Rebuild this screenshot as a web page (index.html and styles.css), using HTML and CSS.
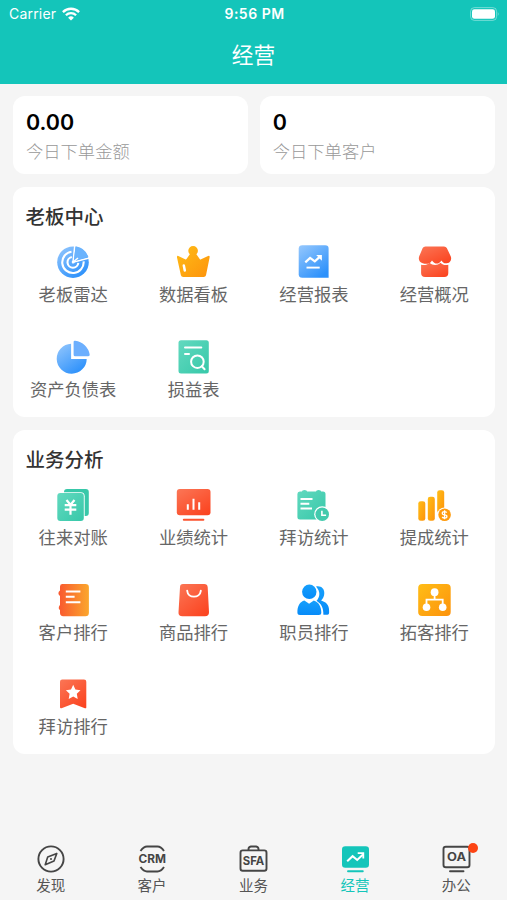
FILE: index.html
```html
<!DOCTYPE html>
<html lang="zh-CN">
<head>
<meta charset="utf-8">
<title>经营</title>
<link rel="stylesheet" href="styles.css">
</head>
<body>
<svg class="defs" width="0" height="0" aria-hidden="true">
  <defs>
    <linearGradient id="blue" x1="0" y1="0" x2=".7" y2="1"><stop offset="0" stop-color="#96c8fd"/><stop offset="1" stop-color="#2d91fb"/></linearGradient>
    <linearGradient id="gold" x1="0" y1="0" x2="1" y2="1"><stop offset="0" stop-color="#ffbd16"/><stop offset="1" stop-color="#fd930c"/></linearGradient>
    <linearGradient id="red" x1="0" y1="0" x2=".8" y2="1"><stop offset="0" stop-color="#fb7656"/><stop offset="1" stop-color="#fb4521"/></linearGradient>
    <linearGradient id="green" x1="0" y1="0" x2="1" y2="1"><stop offset="0" stop-color="#62d9bf"/><stop offset="1" stop-color="#37c8a9"/></linearGradient>
    <linearGradient id="sunset" x1="0" y1="0" x2="1" y2="0"><stop offset="0" stop-color="#f9572f"/><stop offset="1" stop-color="#fba72d"/></linearGradient>
    <linearGradient id="azure" x1="0" y1="0" x2="0" y2="1"><stop offset="0" stop-color="#169ffc"/><stop offset="1" stop-color="#078bf8"/></linearGradient>
  </defs>
</svg>

<header class="header">
  <div class="status">
    <div class="carrier">Carrier
      <svg width="18" height="14" viewBox="0 0 18 14" fill="none" stroke="#fff" stroke-width="2.3"><path d="M.9 5.1a11.5 11.5 0 0 1 16.2 0M3.9 8.3a7.3 7.3 0 0 1 10.2 0"/><path d="M9 13.6 6.1 10.7a4.1 4.1 0 0 1 5.8 0z" fill="#fff" stroke="none"/></svg>
    </div>
    <div class="time">9:56 PM</div>
    <div class="battery">
      <svg width="30" height="14" viewBox="0 0 30 14"><rect x=".6" y=".6" width="26" height="12.8" rx="3.8" fill="none" stroke="#fff" stroke-opacity=".4"/><rect x="2" y="2.2" width="23" height="9.6" rx="2.4" fill="#fff"/><path d="M27.8 4.8q1.8 2.2 0 4.4z" fill="#fff" fill-opacity=".45"/></svg>
    </div>
  </div>
  <h1 class="title">经营</h1>
</header>

<main class="content">
  <div class="stats">
    <div class="stat"><strong>0.00</strong><span>今日下单金额</span></div>
    <div class="stat"><strong>0</strong><span>今日下单客户</span></div>
  </div>

  <section class="panel">
    <h2>老板中心</h2>
    <div class="grid">
      <div class="item">
        <svg viewBox="0 0 36 36"><circle cx="18" cy="18.2" r="15.8" fill="url(#blue)"/><path d="M19.8 1.5 18 18.2 35 13.7" fill="none" stroke="#fff" stroke-width="1.5"/><path d="M16.5 7.700A10.700 10.700 0 1 0 28.600 17.400M16.800 13a5.400 5.400 0 1 0 6.500 5.800" fill="none" stroke="#fff" stroke-width="2.100"/><path d="M20.7 2.2 18.8 16.9 33.4 13A16 16 0 0 0 20.7 2.2z" fill="#6ab3fd"/><path d="M18.200 18 23 14" stroke="#fff" stroke-width="1.500"/><circle cx="18.200" cy="18" r="1.500" fill="#fff"/></svg>
        <span>老板雷达</span>
      </div>
      <div class="item">
        <svg viewBox="0 0 36 36"><path d="M14.800 10.300a4.800 4.800 0 1 1 6.600 0l3.300 4.700q.5.900 1.400.3l6.400-3.100q2.500-1.200 2.100 1.200L31 31.200Q30.600 33 28.600 33H8.200Q6.300 33 5.900 31.200L2 13.400q-.2-2.400 1.900-1.200l6.200 3.100q.9.500 1.400-.3z" fill="url(#gold)"/><path d="m8.8 21.4 1 5.2" stroke="#fff" stroke-width="2.5" stroke-linecap="round"/></svg>
        <span>数据看板</span>
      </div>
      <div class="item">
        <svg viewBox="0 0 36 36"><path d="M7.3 1.2H30.2q3.4 0 3.4 3.2V33.8H7.3Q3.7 33.8 3.7 30.3V4.6Q3.7 1.2 7.3 1.2z" fill="url(#blue)"/><path d="m10.3 18.4 4.8-4.5 4.7 3.4 5.8-5.2" fill="none" stroke="#fff" stroke-width="2.2"/><path d="M21.2 11h5.7v5.8z" fill="#fff"/><path d="M11.5 23.6h13.2" stroke="#fff" stroke-width="1.9"/></svg>
        <span>经营报表</span>
      </div>
      <div class="item">
        <svg viewBox="0 0 36 36"><path d="M9.4 2.5H28q2 0 2.8 1.6l4 8.3c1.2 3.3-.8 6.2-3.1 6.7-3.2.9-5.2-.8-6.3-2.700-2.300 4.100-6.800 4.100-9.400 0-2.500 4.100-6 3.800-9.300 2.900-3.300-1.100-4.700-4-3.400-7.200l3.400-8Q7.500 2.500 9.400 2.500z" fill="url(#red)"/><path d="M5.100 20.800c3.100.8 6.500 0 8.400-2 3.400 3 7.800 3 11 0 2 2 4.600 2.800 7.800 2V29q0 4-4 4H9.100q-4 0-4-4z" fill="url(#red)"/></svg>
        <span>经营概况</span>
      </div>
      <div class="item">
        <svg viewBox="0 0 36 36"><path d="M16.1 4.7V19.9H31.7A15 15 0 1 1 16.1 4.7z" fill="url(#blue)"/><path d="M18.6 3q0-1.6 1.6-1.3A16.8 16.8 0 0 1 34.7 15.6q.2 1.6-1.4 1.6H20.2q-1.6 0-1.6-1.5z" fill="#6caffe"/></svg>
        <span>资产负债表</span>
      </div>
      <div class="item">
        <svg viewBox="0 0 36 36"><rect x="3.5" y="1.3" width="30.3" height="33.2" rx="2.5" fill="url(#green)"/><g fill="none" stroke="#fff" stroke-width="2" stroke-linecap="round"><path d="M10 8.5h16.3M10 15.1h4"/><circle cx="22.4" cy="22.7" r="6.3"/><path d="m26.8 27.2 2.8 3"/></g></svg>
        <span>损益表</span>
      </div>
    </div>
  </section>

  <section class="panel">
    <h2>业务分析</h2>
    <div class="grid">
      <div class="item">
        <svg viewBox="0 0 36 36"><rect x="9" y="2" width="24.8" height="27" rx="3" fill="#38c8a9"/><rect x="1.5" y="5.2" width="28.2" height="29.7" rx="4" fill="#fff"/><rect x="2.3" y="6" width="26.5" height="28" rx="3" fill="url(#green)"/><path d="m11.5 13 4 4.7 4-4.7M9.7 18.2h11.6M9.7 22.7h11.6M15.5 17.8v10" fill="none" stroke="#fff" stroke-width="2.2"/></svg>
        <span>往来对账</span>
      </div>
      <div class="item">
        <svg viewBox="0 0 36 36"><rect x="1.8" y="2.1" width="33.7" height="26.2" rx="3" fill="url(#red)"/><path d="M12.8 17.2v5.6M18.5 11.7v11.1M24.2 15.2v7.6" stroke="#fff" stroke-width="2"/><path d="M8.8 32.7h19.6" stroke="#fc532f" stroke-width="2" stroke-linecap="round"/></svg>
        <span>业绩统计</span>
      </div>
      <div class="item">
        <svg viewBox="0 0 36 36"><path d="M4.800 4.500h2.100q0-1.500 2.600-1.500t2.600 1.500H21q0-1.500 2.600-1.500T26.200 4.500H28q2.500 0 2.500 2.500v25.500H5q-2.600 0-2.600-2.500V7Q2.400 4.500 4.800 4.500z" fill="url(#green)"/><path d="M5.500 11.900h12M5.500 16.700h8.800M5.500 21.500h11.500" stroke="#fff" stroke-width="2"/><circle cx="27.200" cy="27.200" r="8" fill="#fff"/><circle cx="27.200" cy="27.200" r="6.800" fill="#43caad"/><path d="M26.900 23.700v4.500h4.200" fill="none" stroke="#fff" stroke-width="1.600"/></svg>
        <span>拜访统计</span>
      </div>
      <div class="item">
        <svg viewBox="0 0 36 36"><rect x="2.300" y="14.200" width="7" height="19.600" rx="2.400" fill="url(#gold)"/><rect x="11.800" y="9.700" width="7" height="24.100" rx="2.400" fill="url(#gold)"/><rect x="21.200" y="3.200" width="7" height="23" rx="2.400" fill="url(#gold)"/><circle cx="28.600" cy="27.800" r="7.400" fill="#fff"/><circle cx="28.600" cy="27.800" r="6.300" fill="#ff9b0d"/><path d="M30.700 25.700q-.7-1-2.200-1-2.200 0-2.200 1.500t2.300 1.600 2.300 1.700-2.300 1.600q-1.600 0-2.400-1.100M28.600 23.300v9" fill="none" stroke="#fff" stroke-width="1.300"/></svg>
        <span>提成统计</span>
      </div>
      <div class="item">
        <svg viewBox="0 0 36 36"><path d="M7.500 2H30.500q3.400 0 3.400 3.300v25.400q0 3.500-3.500 3.500H8.200q-3.200 0-3.200-3.400v-2.600q-1.700-1.300-1.200-3 .2-1.600 1.200-2.300v-9q-1.600-.7-1.600-2.600T5 8.400V4.400Q5 2 7.500 2z" fill="url(#sunset)"/><path d="M10.800 9.600h14.600M10.800 14.800h8.800M10.800 20.200h14.600" stroke="#fff" stroke-width="2"/></svg>
        <span>客户排行</span>
      </div>
      <div class="item">
        <svg viewBox="0 0 36 36"><path d="M8 2H29.200q3.200 0 3.500 3.200L34 30.300q0 4-4 4H7.400q-4.200 0-3.900-4L5 5.200Q5 2 8 2z" fill="url(#red)"/><path d="M12.200 8.800c.6 7.800 12.800 7.800 13.600 0" fill="none" stroke="#fff" stroke-width="1.900" stroke-linecap="round"/></svg>
        <span>商品排行</span>
      </div>
      <div class="item">
        <svg viewBox="0 0 36 36"><g fill="url(#azure)"><path d="M21 4.500c5-1 8.300 2 8.300 6.500 0 3.500-1.300 5.500-3.200 7.500 5 1.500 8 4.500 8 10V31q0 1.700-1.700 1.700h-4C28.400 26 26.500 21 21 19.500c4.500-5 4.500-10 0-15z"/><path d="M2.400 30.500C2.200 24 5 19.600 9.400 18.500l4.700 3.200 4.700-3.200c4.700 1.500 7.500 6 7.500 12q0 2.500-2.500 2.500H5q-2.600 0-2.600-2.500z" stroke="#fff" stroke-width="1.500" paint-order="stroke"/><circle cx="14.300" cy="9.800" r="7.200" stroke="#fff" stroke-width="1.500" paint-order="stroke"/></g></svg>
        <span>职员排行</span>
      </div>
      <div class="item">
        <svg viewBox="0 0 36 36"><rect x="2.200" y="2" width="32.500" height="32" rx="4" fill="url(#gold)"/><path d="M18.600 12v5.700M10.500 24v-6.300h16.200V24" fill="none" stroke="#fff" stroke-width="1.800"/><g fill="#fff"><circle cx="18.600" cy="10.200" r="3.900"/><circle cx="10.500" cy="25.300" r="3.800"/><circle cx="26.700" cy="25.300" r="3.800"/></g></svg>
        <span>拓客排行</span>
      </div>
      <div class="item">
        <svg viewBox="0 0 36 36"><path d="M7.200 3.400H29q2.300 0 2.300 2.300v25.800q-.2 1.200-1.400.7L18.200 27.700 6.500 32.200Q5 32.700 5 31.200V5.700Q5 3.400 7.200 3.400z" fill="url(#red)"/><path d="m18.200 8.800 2.200 4.700 5.100.7-3.700 3.600.9 5.100-4.500-2.500-4.500 2.500.9-5.100-3.700-3.600 5.100-.7z" fill="#fff"/></svg>
        <span>拜访排行</span>
      </div>
    </div>
  </section>
</main>

<nav class="tabs">
  <div class="tab">
    <svg viewBox="0 0 32 32" fill="none" stroke="#454545" stroke-width="1.900"><circle cx="16" cy="16" r="12.600"/><path d="M21.800 10.400 12.700 14 10.200 21.800 19 18z" stroke-width="1.600" stroke-linejoin="round"/><circle cx="16" cy="16" r="1" fill="#454545" stroke="none"/></svg>
    <span>发现</span>
  </div>
  <div class="tab">
    <svg viewBox="0 0 32 32"><path d="M4.500 8Q7.700 3.500 11 3.500H21.500Q25 3.500 28 8M4.500 24Q7.700 28.500 11 28.500H21.500Q25 28.500 28 24" fill="none" stroke="#454545" stroke-width="1.900"/><text x="16.300" y="20.100" class="glyph" textLength="27.500" lengthAdjust="spacingAndGlyphs">CRM</text></svg>
    <span>客户</span>
  </div>
  <div class="tab">
    <svg viewBox="0 0 32 32"><path d="M11.500 7.500V6q0-2 2.400-2.500h5.200Q21.500 4 21.500 6v1.500" fill="none" stroke="#454545" stroke-width="1.900"/><rect x="3.500" y="7.400" width="26" height="20.300" rx="2.300" fill="none" stroke="#454545" stroke-width="1.900"/><text x="16.500" y="21.800" class="glyph" textLength="21.500" lengthAdjust="spacingAndGlyphs">SFA</text></svg>
    <span>业务</span>
  </div>
  <div class="tab active">
    <svg viewBox="0 0 32 32"><rect x="3" y="3.200" width="27" height="21.500" rx="3.300" fill="#14c5ba"/><path d="m8.200 18.300 5.400-5.100 4.600 3.800 5.800-5.500" fill="none" stroke="#fff" stroke-width="2"/><path d="M18.700 9.200h6.500v6.300h-1.800v-4.500h-4.700z" fill="#fff"/><path d="M9 28.200h14.800" stroke="#14c5ba" stroke-width="1.900" stroke-linecap="round"/></svg>
    <span>经营</span>
  </div>
  <div class="tab">
    <svg viewBox="0 0 32 32"><rect x="3.500" y="3.800" width="26" height="20.500" rx="2.300" fill="none" stroke="#454545" stroke-width="1.900"/><text x="16.500" y="18.400" class="glyph" textLength="19" lengthAdjust="spacingAndGlyphs">OA</text><path d="M10 28.200h13.500" stroke="#454545" stroke-width="1.900" stroke-linecap="round"/></svg>
    <i class="badge"></i>
    <span>办公</span>
  </div>
</nav>
</body>
</html>
```
FILE: styles.css
```css
* {
  box-sizing: border-box;
}

body {
  margin: 0;
  height: 900px;
  display: flex;
  flex-direction: column;
  overflow: hidden;
  background: #f5f5f5;
  color: #333;
  font-family: Inter, "Noto Sans CJK SC", sans-serif;
}

svg {
  display: block;
}

.defs {
  position: absolute;
}

.header {
  height: 84px;
  flex: none;
  background: #14c5ba;
  color: #fff;
}

.status {
  display: grid;
  grid-template-columns: 1fr auto 1fr;
  align-items: center;
  height: 27px;
  padding: 0 7px 0 9px;
  font-size: 14px;
  line-height: 27px;
}

.carrier {
  display: flex;
  align-items: center;
  gap: 6px;
  letter-spacing: 0.2px;
}

.time {
  font-weight: 600;
  font-size: 14px;
  letter-spacing: 0.5px;
}

.battery {
  display: flex;
  justify-content: flex-end;
}

.title {
  margin: 0;
  font-size: 21.7px;
  font-weight: 400;
  line-height: 56px;
  text-align: center;
}

.content {
  flex: 1;
  padding: 12px 12.5px 0 13px;
}

.stats {
  display: grid;
  grid-template-columns: 1fr 1fr;
  gap: 12px;
}

.stat {
  height: 78px;
  padding: 11px 13px;
  border-radius: 12px;
  background: #fff;
}

.stat strong,
.stat span {
  display: block;
}

.stat strong {
  color: #000;
  font-size: 21.5px;
  font-weight: 600;
  line-height: 30px;
}

.stat span {
  color: #999;
  font-size: 17.3px;
  font-weight: 300;
  line-height: 30px;
}

.panel {
  margin-top: 12.5px;
  padding: 15px 0 13px;
  border-radius: 12px;
  background: #fff;
}

.panel h2 {
  margin: 0 12.5px;
  font-size: 19.5px;
  font-weight: 500;
  line-height: 30px;
}

.grid {
  display: grid;
  grid-template-columns: repeat(4, 1fr);
  grid-auto-rows: 94.5px;
  padding-top: 12.5px;
  margin-bottom: -29px;
}

.panel + .panel .grid {
  margin-bottom: -30px;
}

.item {
  display: flex;
  flex-direction: column;
  align-items: center;
  color: #666;
  font-size: 17.3px;
  line-height: 30px;
}

.item svg {
  width: 36px;
  height: 36px;
  margin-right: 1px;
}

.tabs {
  display: grid;
  grid-template-columns: repeat(5, 1fr);
  height: 57px;
  flex: none;
}

.tab {
  position: relative;
  display: flex;
  flex-direction: column;
  align-items: center;
  color: #555;
  font-size: 14.5px;
  line-height: 21px;
}

.tab svg {
  width: 32px;
  height: 32px;
}

.tab.active {
  color: #14c5ba;
}

.glyph {
  fill: #454545;
  font-family: Inter, sans-serif;
  font-size: 11.7px;
  font-weight: 700;
  text-anchor: middle;
}

.badge {
  position: absolute;
  top: 0;
  left: 62px;
  width: 10px;
  height: 10px;
  border-radius: 50%;
  background: #fc4414;
}
```
